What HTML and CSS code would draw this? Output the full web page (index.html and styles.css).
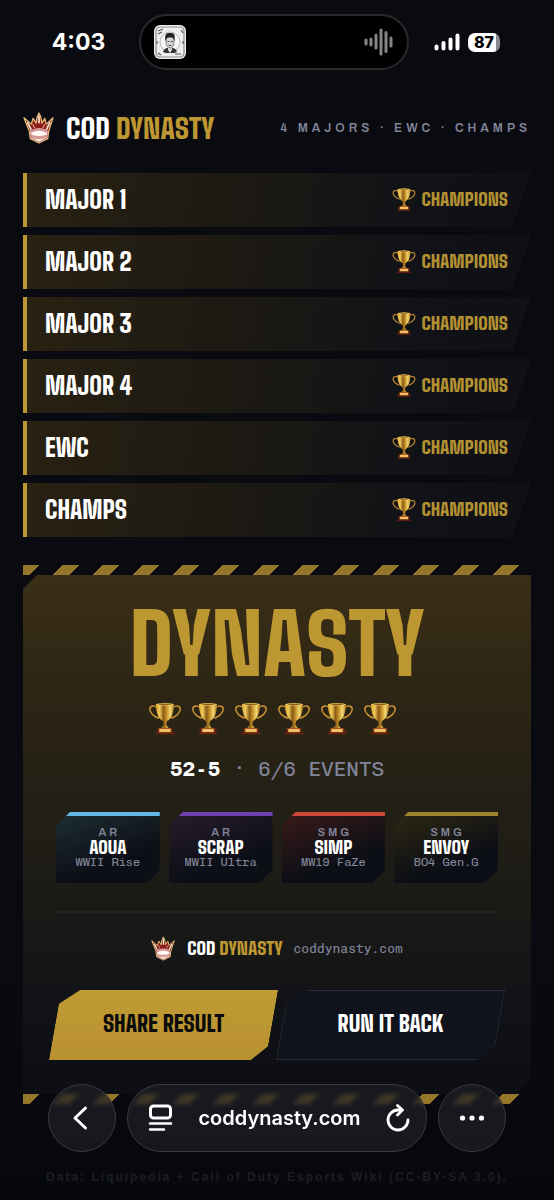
FILE: index.html
```html
<!DOCTYPE html>
<html lang="en">
<head>
<meta charset="utf-8">
<meta name="viewport" content="width=device-width, initial-scale=1">
<title>COD Dynasty</title>
<link rel="stylesheet" href="styles.css">
</head>
<body>
<svg class="defs" aria-hidden="true">
  <defs>
    <linearGradient id="gold" x1="0" x2="1" y1="0" y2="0">
      <stop offset="0" stop-color="#d9a52f"/><stop offset=".2" stop-color="#efc95a"/><stop offset=".42" stop-color="#8a5a16"/><stop offset=".6" stop-color="#c8952a"/><stop offset=".8" stop-color="#f3d872"/><stop offset="1" stop-color="#a8701c"/>
    </linearGradient>
    <linearGradient id="base" x1="0" x2="0" y1="0" y2="1">
      <stop offset="0" stop-color="#8a3a12"/><stop offset="1" stop-color="#5c1c0a"/>
    </linearGradient>
    <symbol id="trophy" viewBox="0 0 32 32">
      <path d="M8.500 5.200C5 2.500.7 3.200.8 6.800c.2 3.600 4.200 7.600 9.200 8.800M23.500 5.200C27 2.500 31.300 3.200 31.200 6.800c-.2 3.600-4.200 7.600-9.200 8.800" fill="none" stroke="#c48d30" stroke-width="1.600"/>
      <path d="M7 1.500h18c0 8-2 14.500-7 17l-.7 3.500 2.700 4h-8l2.700-4-.7-3.500c-5-2.500-7-9-7-17z" fill="url(#gold)"/>
      <ellipse cx="16" cy="1.800" rx="9" ry="1.300" fill="#e8c05a"/>
      <ellipse cx="16" cy="1.900" rx="6.500" ry=".6" fill="#8a5b18"/>
      <path d="M9 25.500h14l1 4.500H8z" fill="url(#base)"/>
      <path d="M10.500 26.200h11l.5 3.600H10z" fill="#f4bd66"/>
      <path d="M6.500 30h19v1.800h-19z" fill="#6e230c"/>
    </symbol>
    <symbol id="crown" viewBox="0 0 32 32">
      <path d="M1 5.500L8.500 12l2-6 3 5L14.500 5 16.500.5 18.500 5l1 6 3-5 1.500 6L31 5.500l-4.500 14-1 7.500-9 4.500-9-4.500-1-7.500z" fill="#8b1d1c" stroke="#e3bd78" stroke-width="1.300" stroke-linejoin="round"/>
      <path d="M4.500 10l4 8M16.500 3v8M28 10l-4 8" stroke="#f3e3c8" stroke-width="1.800" fill="none"/>
      <path d="M10 12l2 4M22.500 12l-2 4" stroke="#e9c9a0" stroke-width="1" fill="none"/>
      <path d="M7 19c5.500-4 13.500-4 19 0l-1 7.500-8.500 4.500L8 26.500z" fill="#d59a98"/>
      <path d="M8 21.500c5.500-3.500 11.500-3.500 17 0-1 3.800-16 3.800-17 0z" fill="#fffaf5"/>
      <path d="M9 26c4 1.800 11 1.800 15 0l-7.500 4z" fill="#fbe9dc"/>
    </symbol>
  </defs>
</svg>

<header class="status">
  <span class="time">4:03</span>
  <div class="island">
    <svg class="art" viewBox="0 0 32 34" aria-hidden="true">
      <rect width="32" height="34" rx="6" fill="#eee"/>
      <rect x="2" y="2" width="28" height="30" rx="4" fill="none" stroke="#8b8b8b" stroke-width="1.200"/>
      <circle cx="16" cy="17" r="10" fill="#f8f8f8" stroke="#aaa" stroke-width=".8"/>
      <path d="M9 27c1-4 4-4 7-5 3 1 6 1 7 5l-3 1h-8z" fill="#343434"/>
      <path d="M14 21h4v4l-2 3-2-3z" fill="#ddd"/>
      <path d="M12 14c0-3 8-3 8 0v4c0 3-2.500 5-4 5s-4-2-4-5z" fill="#d5d5d5" stroke="#444" stroke-width=".6"/>
      <path d="M11.500 16c-1-8 1-8 4.500-8s5.500 0 4.500 8l-1.500-3c-2-1-4-1-6 0z" fill="#222"/>
      <path d="M13.500 16.500h2m1.500 0h2M14.500 20.500h3" stroke="#333" stroke-width=".8"/>
      <path d="M4 6l5-2M4 9l4-2M21 29h6M4 28l3 2M27 5l2 3M3 16v3M29 16v3" stroke="#555" stroke-width="1.200"/>
    </svg>
    <svg class="wave" viewBox="0 0 30 28" aria-hidden="true">
      <path d="M2 12v4M7 11v6M12 7v13M17 2v24M22 4.500v19M27 10v8" stroke="#858585" stroke-width="3" stroke-linecap="round"/>
    </svg>
  </div>
  <div class="signals">
    <svg class="bars" viewBox="0 0 26 18" aria-hidden="true"><path d="M2.500 13.500v2M9.500 10v5.500M16.500 6.500v9M23.500 2.500v13" stroke="#fff" stroke-width="4" stroke-linecap="round"/></svg>
    <span class="battery">87</span>
  </div>
</header>

<main class="page">
  <div class="masthead">
    <h1 class="brand"><svg class="crown" aria-hidden="true"><use href="#crown"/></svg><span>COD <b>DYNASTY</b></span></h1>
    <p class="tagline">4 MAJORS · EWC · CHAMPS</p>
  </div>

  <ul class="events">
    <li class="event"><span>MAJOR 1</span><strong><svg aria-hidden="true"><use href="#trophy"/></svg>CHAMPIONS</strong></li>
    <li class="event"><span>MAJOR 2</span><strong><svg aria-hidden="true"><use href="#trophy"/></svg>CHAMPIONS</strong></li>
    <li class="event"><span>MAJOR 3</span><strong><svg aria-hidden="true"><use href="#trophy"/></svg>CHAMPIONS</strong></li>
    <li class="event"><span>MAJOR 4</span><strong><svg aria-hidden="true"><use href="#trophy"/></svg>CHAMPIONS</strong></li>
    <li class="event"><span>EWC</span><strong><svg aria-hidden="true"><use href="#trophy"/></svg>CHAMPIONS</strong></li>
    <li class="event"><span>CHAMPS</span><strong><svg aria-hidden="true"><use href="#trophy"/></svg>CHAMPIONS</strong></li>
  </ul>

  <div class="hazard"></div>
  <section class="result">
    <h2 class="verdict">DYNASTY</h2>
    <div class="trophies">
      <svg aria-hidden="true"><use href="#trophy"/></svg><svg aria-hidden="true"><use href="#trophy"/></svg><svg aria-hidden="true"><use href="#trophy"/></svg><svg aria-hidden="true"><use href="#trophy"/></svg><svg aria-hidden="true"><use href="#trophy"/></svg><svg aria-hidden="true"><use href="#trophy"/></svg>
    </div>
    <p class="record"><b>52-5</b> · 6/6 EVENTS</p>
    <ul class="roster">
      <li class="player sky"><small>AR</small><b>AOUA</b><span>WWII Rise</span></li>
      <li class="player violet"><small>AR</small><b>SCRAP</b><span>MWII Ultra</span></li>
      <li class="player red"><small>SMG</small><b>SIMP</b><span>MW19 FaZe</span></li>
      <li class="player olive"><small>SMG</small><b>ENVOY</b><span>BO4 Gen.G</span></li>
    </ul>
    <div class="signature">
      <svg class="crown" aria-hidden="true"><use href="#crown"/></svg>
      <span class="mark">COD <b>DYNASTY</b></span>
      <span class="site">coddynasty.com</span>
    </div>
    <div class="actions">
      <button class="cta primary" type="button">SHARE RESULT</button>
      <button class="cta secondary" type="button">RUN IT BACK</button>
    </div>
  </section>
  <div class="hazard"></div>
  <p class="credit">Data: Liquipedia + Call of Duty Esports Wiki (CC-BY-SA 3.0).</p>
</main>

<nav class="toolbar">
  <button class="round" type="button" aria-label="Back"><svg width="32" height="32" viewBox="0 0 32 32"><path d="M19.500 6L9 16 19.500 26" fill="none" stroke="#fff" stroke-width="3" stroke-linecap="round" stroke-linejoin="round"/></svg></button>
  <div class="address">
    <button class="tool" type="button" aria-label="Page menu"><svg width="28" height="28" viewBox="0 0 28 28"><rect x="3.500" y="2" width="20" height="12" rx="3" fill="none" stroke="#fff" stroke-width="3"/><path d="M3 19.500h21M3 25.500h14" stroke="#fff" stroke-width="2.500" stroke-linecap="round"/></svg></button>
    <a href="#">coddynasty.com</a>
    <button class="tool" type="button" aria-label="Reload"><svg width="28" height="28" viewBox="0 0 28 28"><path d="M14 6a10 10 0 1 0 10 10M12.500 6h5M13.500 1.500L18.500 6l-5 5" fill="none" stroke="#fff" stroke-width="2.800" stroke-linecap="round" stroke-linejoin="round"/></svg></button>
  </div>
  <button class="round" type="button" aria-label="More"><svg width="32" height="32" viewBox="0 0 32 32" fill="#fff"><circle cx="6.500" cy="16" r="2.600"/><circle cx="16" cy="16" r="2.600"/><circle cx="25.500" cy="16" r="2.600"/></svg></button>
</nav>
</body>
</html>
```
FILE: styles.css
```css
:root {
  --gold: #bd9731;
  --muted: #81859a;
  --display: "Big Shoulders Text", "Big Shoulders Display", "Liberation Sans Narrow", sans-serif;
  --ui: Inter, "Liberation Sans", sans-serif;
  --label: Archivo, Inter, "Liberation Sans", sans-serif;
  --mono: "Chivo Mono", "Liberation Mono", monospace;
}
* { box-sizing: border-box; margin: 0; }
body {
  min-height: 100vh;
  background: linear-gradient(#0a0b10, #0a0b10 80%, #07080c);
  color: #fff;
  font-family: var(--ui);
}
ul { list-style: none; padding: 0; }
button { border: 0; padding: 0; background: none; color: inherit; font: inherit; }
svg { display: block; }
.defs { position: absolute; width: 0; height: 0; }

.status {
  display: grid;
  grid-template-columns: 1fr 270px 1fr;
  align-items: center;
  height: 84px;
  padding: 0 12px 0 6px;
}
.time { justify-self: center; font-size: 23px; font-weight: 700; padding-left: 12px; }
.island {
  display: flex;
  align-items: center;
  justify-content: space-between;
  height: 56px;
  padding: 0 13px;
  border: 2px solid #2a2a2d;
  border-radius: 28px;
  background: #000;
}
.art { width: 32px; height: 34px; }
.wave { width: 30px; height: 28px; }
.signals { display: flex; align-items: center; gap: 8px; padding-left: 25px; }
.bars { width: 26px; height: 18px; }
.battery {
  width: 32px;
  border-radius: 7px;
  background: linear-gradient(90deg, #fff 28px, #8b8b8e 28px);
  color: #000;
  font-size: 16px;
  font-weight: 800;
  line-height: 19px;
  text-align: center;
}

.page { padding: 20px 23px 0; }
.masthead { display: flex; align-items: center; justify-content: space-between; height: 48px; margin-bottom: 21px; }
.brand {
  display: flex;
  align-items: center;
  gap: 12px;
  font-family: var(--display);
  font-size: 28px;
  font-weight: 900;
}
.brand b, .mark b { color: var(--gold); font-weight: inherit; }
.crown { width: 31px; height: 32px; }
.tagline { color: var(--muted); font-family: var(--label); font-size: 12px; font-weight: 600; letter-spacing: 4px; }

.events { display: grid; gap: 8px; margin-bottom: 28px; }
.event {
  display: flex;
  align-items: center;
  justify-content: space-between;
  height: 54px;
  padding: 0 23px 2px 18px;
  border-left: 4px solid var(--gold);
  background: linear-gradient(100deg, #292112, #1a1814 50%, #101217 78%, #101117);
  clip-path: polygon(0 0, 100% 0, calc(100% - 19px) 100%, 0 100%);
  font-family: var(--display);
  font-size: 24px;
  font-weight: 900;
}
.event strong { display: flex; align-items: center; gap: 5px; color: #b39132; font-size: 18px; font-weight: 900; }
.event svg { width: 24px; height: 23px; }

.hazard { height: 10px; background: linear-gradient(135deg, #93762a 12px, transparent 12px 28px, #93762a 28px) 0 0 / 40px 10px; }
.result {
  padding: 24px 32px 34px;
  background: linear-gradient(#3a2e16, #2a2415 28%, #1c1b16 60%, #101217 85%, #0d0e15);
  clip-path: polygon(14px 0, 100% 0, 100% calc(100% - 14px), calc(100% - 14px) 100%, 0 100%, 0 14px);
}
.verdict {
  color: var(--gold);
  font-family: var(--display);
  font-size: 84px;
  font-weight: 900;
  line-height: 90px;
  text-align: center;
}
.trophies { display: flex; justify-content: center; gap: 11px; margin-top: 13px; padding-right: 10px; }
.trophies svg { width: 32px; height: 33px; }
.record {
  margin-top: 20px;
  color: var(--muted);
  font-family: var(--mono);
  font-size: 21px;
  line-height: 28px;
  text-align: center;
}
.record b { color: #fff; }

.roster { display: grid; grid-template-columns: repeat(4, 1fr); gap: 9px; margin: 29px 1px 0; }
.player {
  display: grid;
  align-content: start;
  justify-items: center;
  height: 71px;
  padding-top: 10px;
  border-top: 4px solid var(--accent);
  background: linear-gradient(160deg, var(--glow), #0d0f16 65%);
  clip-path: polygon(14px 0, 100% 0, 100% calc(100% - 13px), calc(100% - 13px) 100%, 0 100%, 0 14px);
}
.sky { --accent: #62b7e2; --glow: #1c2d31; }
.violet { --accent: #7040b0; --glow: #261c2b; }
.red { --accent: #ce493c; --glow: #381a19; }
.olive { --accent: #9c842a; --glow: #2c2712; }
.player small { color: var(--muted); font-family: var(--label); font-size: 11px; font-weight: 600; line-height: 13px; letter-spacing: 3px; padding-left: 3px; }
.player b { font-family: var(--display); font-size: 18px; font-weight: 900; line-height: 17px; }
.player span { color: var(--muted); font-family: var(--mono); font-size: 12px; line-height: 12px; }

.signature {
  display: flex;
  align-items: center;
  justify-content: center;
  height: 72px;
  margin: 28px 1px 0;
  border-top: 2px solid #202125;
}
.signature .crown { width: 24px; height: 25px; }
.mark { margin: 0 11px 0 12px; font-family: var(--display); font-size: 18px; font-weight: 900; }
.site { color: var(--muted); font-family: var(--mono); font-size: 13px; }

.actions { display: grid; grid-template-columns: 1fr 1fr; gap: 10px; margin-top: 7px; }
.cta {
  position: relative;
  z-index: 0;
  height: 70px;
  padding-bottom: 3px;
  font-family: var(--display);
  font-size: 22px;
  font-weight: 900;
}
.cta::before {
  content: "";
  position: absolute;
  z-index: -1;
  inset: 0;
  clip-path: polygon(19px 0, 100% 0, 100% calc(100% - 14px), calc(100% - 15px) 100%, 0 100%, 0 14px);
  transform: skewX(-10deg);
}
.primary { color: #0b0b0c; }
.primary::before { background: linear-gradient(#c09a34, #b99230); }
.secondary::before { border: 1px solid #282a38; background: #11131c; }

.credit {
  margin-top: 65px;
  padding-bottom: 15px;
  color: #1d1e23;
  font-family: "Liberation Sans", sans-serif;
  font-size: 12px;
  font-weight: 700;
  letter-spacing: 2px;
  line-height: 16px;
  text-align: center;
  white-space: nowrap;
}

.toolbar { position: fixed; z-index: 2; right: 48px; bottom: 48px; left: 48px; display: flex; gap: 11px; }
.round, .address {
  height: 68px;
  border: 1px solid #393b42;
  border-radius: 34px;
  background: rgb(30 31 38 / 72%);
  backdrop-filter: blur(2px);
}
.round { display: grid; place-items: center; flex: 0 0 68px; }
.address { display: flex; flex: 1; align-items: center; justify-content: space-between; padding: 0 14px 0 19px; }
.address a { color: #fff; font-size: 20px; font-weight: 600; text-decoration: none; }
```
